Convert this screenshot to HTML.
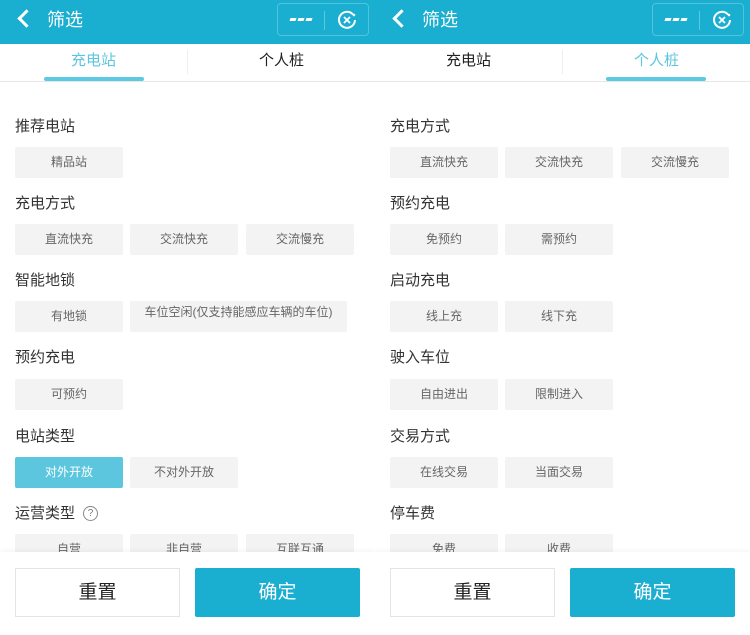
<!DOCTYPE html>
<html><head><meta charset="utf-8"><style>
*{margin:0;padding:0;box-sizing:border-box}
body{width:750px;height:635px;overflow:hidden;background:#fff;font-family:"Liberation Sans","Noto Sans CJK SC",sans-serif;position:relative}
.p{position:absolute;top:0;width:375px;height:635px;overflow:hidden;background:#fff}
.hd{position:absolute;left:0;top:0;width:375px;height:44px;background:#1aaed0;color:#fff}
.hd .t{position:absolute;left:47px;top:6px;font-size:18px}
.hd .bk{position:absolute;left:20px;top:12px;width:13px;height:13px;border-left:3px solid #fff;border-bottom:3px solid #fff;transform:rotate(45deg);transform-origin:center}
.cap{position:absolute;left:277px;top:3px;width:92px;height:33px;border:1px solid rgba(255,255,255,.25);border-radius:4px}
.cap .sep{position:absolute;left:46px;top:7px;width:1px;height:19px;background:rgba(255,255,255,.3)}
.dots{position:absolute;left:12px;top:14px;font-size:0}
.dots i{display:inline-block;width:6px;height:3px;background:#fff;margin-right:2px;transform:skewX(-20deg)}
.tabs{position:absolute;left:0;top:44px;width:375px;height:38px;border-bottom:1px solid #e6e6e6;background:#fff}
.tab{position:absolute;top:5px;font-size:15px;color:#222;width:187px;text-align:center}
.tab.on{color:#5cc5e0}
.tsep{position:absolute;left:187px;top:6px;width:1px;height:24px;background:#eee}
.bar{position:absolute;top:33px;height:4px;border-radius:2px;background:#5cc9e3;width:100px}
.lb{position:absolute;left:15px;font-size:15px;color:#333;margin-top:-1px}
.c{position:absolute;height:31px;width:108px;background:#f3f3f3;border-radius:2px;font-size:12px;color:#666;text-align:center;line-height:31px}
.c.on{background:#5bc6de;color:#fff}
.ft{position:absolute;left:0;top:552px;width:375px;height:83px;background:#fff;box-shadow:0 -2px 4px rgba(0,0,0,.04)}
.rs{position:absolute;left:15px;top:16px;width:165px;height:49px;border:1px solid #e4e4e4;font-size:19px;color:#222;text-align:center;line-height:47px}
.ok{position:absolute;left:195px;top:16px;width:165px;height:49px;background:#1aaed0;border-radius:2px;font-size:19px;color:#fff;text-align:center;line-height:49px}
.q{display:inline-block;width:15px;height:15px;border:1px solid #888;border-radius:50%;font-size:10px;line-height:13px;text-align:center;color:#777;margin-left:8px;vertical-align:2px}
</style></head><body>

<div class="p" style="left:0">
<div class="hd"><div class="bk"></div><div class="t">筛选</div>
<div class="cap"><div class="dots"><i></i><i></i><i></i></div><div class="sep"></div>
<svg style="position:absolute;left:58px;top:5px" width="22" height="22" viewBox="0 0 22 22"><path d="M17 5.5A8 8 0 1 0 19 11" fill="none" stroke="#fff" stroke-width="2"/><circle cx="18" cy="6" r="1.3" fill="#fff"/><path d="M8 8l6 6M14 8l-6 6" stroke="#fff" stroke-width="1.8"/></svg></div></div>
<div class="tabs"><div class="tab on" style="left:0">充电站</div><div class="tsep"></div><div class="tab" style="left:188px">个人桩</div><div class="bar" style="left:44px"></div></div>
<div class="lb" style="top:116px">推荐电站</div>
<div class="c" style="left:15px;top:147px">精品站</div>
<div class="lb" style="top:193px">充电方式</div>
<div class="c" style="left:15px;top:224px">直流快充</div><div class="c" style="left:130px;top:224px">交流快充</div><div class="c" style="left:246px;top:224px">交流慢充</div>
<div class="lb" style="top:270px">智能地锁</div>
<div class="c" style="left:15px;top:301px">有地锁</div><div class="c" style="left:130px;top:301px;width:217px;line-height:22px">车位空闲(仅支持能感应车辆的车位)</div>
<div class="lb" style="top:347px">预约充电</div>
<div class="c" style="left:15px;top:379px">可预约</div>
<div class="lb" style="top:426px">电站类型</div>
<div class="c on" style="left:15px;top:457px">对外开放</div><div class="c" style="left:130px;top:457px">不对外开放</div>
<div class="lb" style="top:503px">运营类型<span class="q">?</span></div>
<div class="c" style="left:15px;top:534px">自营</div><div class="c" style="left:130px;top:534px">非自营</div><div class="c" style="left:246px;top:534px">互联互通</div>
<div class="ft"><div class="rs">重置</div><div class="ok">确定</div></div>
</div>

<div class="p" style="left:375px">
<div class="hd"><div class="bk"></div><div class="t">筛选</div>
<div class="cap"><div class="dots"><i></i><i></i><i></i></div><div class="sep"></div>
<svg style="position:absolute;left:58px;top:5px" width="22" height="22" viewBox="0 0 22 22"><path d="M17 5.5A8 8 0 1 0 19 11" fill="none" stroke="#fff" stroke-width="2"/><circle cx="18" cy="6" r="1.3" fill="#fff"/><path d="M8 8l6 6M14 8l-6 6" stroke="#fff" stroke-width="1.8"/></svg></div></div>
<div class="tabs"><div class="tab" style="left:0">充电站</div><div class="tsep"></div><div class="tab on" style="left:188px">个人桩</div><div class="bar" style="left:231px"></div></div>
<div class="lb" style="top:116px">充电方式</div>
<div class="c" style="left:15px;top:147px">直流快充</div><div class="c" style="left:130px;top:147px">交流快充</div><div class="c" style="left:246px;top:147px">交流慢充</div>
<div class="lb" style="top:193px">预约充电</div>
<div class="c" style="left:15px;top:224px">免预约</div><div class="c" style="left:130px;top:224px">需预约</div>
<div class="lb" style="top:270px">启动充电</div>
<div class="c" style="left:15px;top:301px">线上充</div><div class="c" style="left:130px;top:301px">线下充</div>
<div class="lb" style="top:347px">驶入车位</div>
<div class="c" style="left:15px;top:379px">自由进出</div><div class="c" style="left:130px;top:379px">限制进入</div>
<div class="lb" style="top:426px">交易方式</div>
<div class="c" style="left:15px;top:457px">在线交易</div><div class="c" style="left:130px;top:457px">当面交易</div>
<div class="lb" style="top:503px">停车费</div>
<div class="c" style="left:15px;top:534px">免费</div><div class="c" style="left:130px;top:534px">收费</div>
<div class="ft"><div class="rs">重置</div><div class="ok">确定</div></div>
</div>
</body></html>
